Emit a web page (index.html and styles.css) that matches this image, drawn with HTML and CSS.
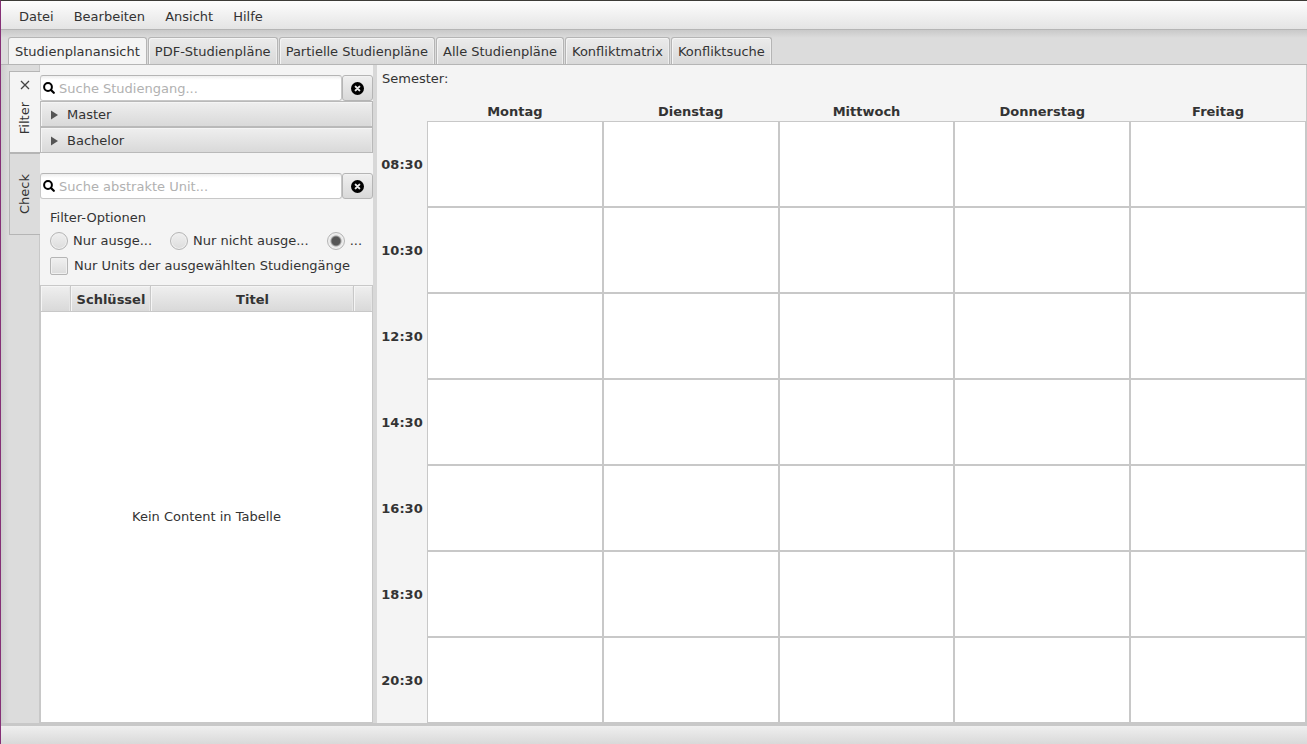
FILE: index.html
```html
<!DOCTYPE html>
<html lang="de">
<head>
<meta charset="utf-8">
<title>Studienplanansicht</title>
<link rel="stylesheet" href="styles.css">
</head>
<body>
<div class="window">
  <nav class="menubar">
    <button type="button">Datei</button>
    <button type="button">Bearbeiten</button>
    <button type="button">Ansicht</button>
    <button type="button">Hilfe</button>
  </nav>
  <div class="tabs" role="tablist">
    <button type="button" role="tab" class="tab active" aria-selected="true">Studienplanansicht</button>
    <button type="button" role="tab" class="tab">PDF-Studienpläne</button>
    <button type="button" role="tab" class="tab">Partielle Studienpläne</button>
    <button type="button" role="tab" class="tab">Alle Studienpläne</button>
    <button type="button" role="tab" class="tab">Konfliktmatrix</button>
    <button type="button" role="tab" class="tab">Konfliktsuche</button>
  </div>
  <main class="content">
    <div class="side-tabs" role="tablist">
      <div class="side-tab selected">
        <button type="button" class="close" aria-label="Schließen">
          <svg width="10" height="10" viewBox="0 0 10 10"><path d="M1 1L9 9M9 1L1 9" stroke="#444" stroke-width="1.3" fill="none"/></svg>
        </button>
        <button type="button" role="tab" class="side-label">Filter</button>
      </div>
      <div class="side-tab">
        <button type="button" role="tab" class="side-label">Check</button>
      </div>
    </div>
    <section class="filter">
      <div class="search">
        <div class="field">
          <svg class="lens" width="12" height="12" viewBox="0 0 12 12"><circle cx="5" cy="5" r="3.9" fill="none" stroke="#000" stroke-width="2"/><path d="M8 8L10.8 10.8" stroke="#000" stroke-width="2.2" stroke-linecap="round"/></svg>
          <input type="text" placeholder="Suche Studiengang..." aria-label="Suche Studiengang">
        </div>
        <button type="button" class="clear" aria-label="Suche leeren">
          <svg width="13" height="13" viewBox="0 0 14 14"><circle cx="7" cy="7" r="7" fill="#000"/><path d="M5 5L9 9M9 5L5 9" stroke="#e8e8e8" stroke-width="2.2" stroke-linecap="round"/></svg>
        </button>
      </div>
      <button type="button" class="group"><svg width="7" height="10" viewBox="0 0 7 10"><path d="M0 0.5L7 5L0 9.5Z" fill="#555"/></svg>Master</button>
      <button type="button" class="group"><svg width="7" height="10" viewBox="0 0 7 10"><path d="M0 0.5L7 5L0 9.5Z" fill="#555"/></svg>Bachelor</button>
      <div class="search units">
        <div class="field">
          <svg class="lens" width="12" height="12" viewBox="0 0 12 12"><circle cx="5" cy="5" r="3.9" fill="none" stroke="#000" stroke-width="2"/><path d="M8 8L10.8 10.8" stroke="#000" stroke-width="2.2" stroke-linecap="round"/></svg>
          <input type="text" placeholder="Suche abstrakte Unit..." aria-label="Suche abstrakte Unit">
        </div>
        <button type="button" class="clear" aria-label="Suche leeren">
          <svg width="13" height="13" viewBox="0 0 14 14"><circle cx="7" cy="7" r="7" fill="#000"/><path d="M5 5L9 9M9 5L5 9" stroke="#e8e8e8" stroke-width="2.2" stroke-linecap="round"/></svg>
        </button>
      </div>
      <fieldset class="options">
        <legend>Filter-Optionen</legend>
        <div class="radios">
          <label><input type="radio" name="units">Nur ausge...</label>
          <label><input type="radio" name="units">Nur nicht ausge...</label>
          <label><input type="radio" name="units" checked>...</label>
        </div>
        <label class="check"><input type="checkbox">Nur Units der ausgewählten Studiengänge</label>
      </fieldset>
      <div class="units-list">
        <table class="units-table">
          <colgroup><col class="c-mark"><col class="c-key"><col><col class="c-menu"></colgroup>
          <thead><tr><th></th><th>Schlüssel</th><th>Titel</th><th></th></tr></thead>
        </table>
        <div class="empty">Kein Content in Tabelle</div>
      </div>
    </section>
    <div class="splitter"></div>
    <section class="plan">
      <div class="semester">Semester:</div>
      <table class="week">
        <colgroup><col class="c-time"><col><col><col><col><col></colgroup>
        <thead><tr><td></td><th>Montag</th><th>Dienstag</th><th>Mittwoch</th><th>Donnerstag</th><th>Freitag</th></tr></thead>
        <tbody>
          <tr><th>08:30</th><td></td><td></td><td></td><td></td><td></td></tr>
          <tr><th>10:30</th><td></td><td></td><td></td><td></td><td></td></tr>
          <tr><th>12:30</th><td></td><td></td><td></td><td></td><td></td></tr>
          <tr><th>14:30</th><td></td><td></td><td></td><td></td><td></td></tr>
          <tr><th>16:30</th><td></td><td></td><td></td><td></td><td></td></tr>
          <tr><th>18:30</th><td></td><td></td><td></td><td></td><td></td></tr>
          <tr><th>20:30</th><td></td><td></td><td></td><td></td><td></td></tr>
        </tbody>
      </table>
    </section>
  </main>
  <footer class="status"></footer>
</div>
</body>
</html>
```
FILE: styles.css
```css
* { box-sizing: border-box; }

body {
  margin: 0;
  font: 13px/16px "DejaVu Sans", sans-serif;
  color: #333;
}

button, input {
  margin: 0;
  font: inherit;
  color: inherit;
}

button {
  padding: 0;
  border: 0;
  background: none;
}

svg { display: block; flex: none; }

table { border-spacing: 0; table-layout: fixed; width: 100%; }
th, td { padding: 0; }

.window {
  display: flex;
  flex-direction: column;
  min-height: 100vh;
  background: #f4f4f4;
  border-top: 1px solid #3c3b37;
  border-left: 1px solid #853076;
}

.menubar {
  display: flex;
  gap: 20px;
  height: 29px;
  padding: 3px 18px 0;
  background: linear-gradient(#fdfdfd, #e4e4e4);
  border-bottom: 1px solid #b5b5b5;
}

.tabs {
  display: flex;
  align-items: flex-end;
  gap: 1px;
  height: 35px;
  padding: 0 7px;
  background: linear-gradient(#c9c9c9, #dcdcdc 8px);
  border-bottom: 1px solid #b5b5b5;
}

.tab {
  height: 27px;
  padding: 2px 6px 0;
  background: linear-gradient(#ebebeb, #d9d9d9);
  border: 1px solid #b5b5b5;
  border-bottom: 0;
  border-radius: 3px 3px 0 0;
  box-shadow: inset 1px 1px #f4f4f4, inset -1px 0 #eee;
  white-space: nowrap;
}

.tab.active {
  background: #f4f4f4;
  box-shadow: none;
}

.content {
  display: flex;
  flex: 1;
  border-bottom: 1px solid #c8c8c8;
}

.side-tabs {
  width: 39px;
  padding: 6px 0 0 8px;
  background: linear-gradient(90deg, #cdcdcd, #dcdcdc 8px);
  border-right: 1px solid #c8c8c8;
}

.side-tab {
  display: flex;
  flex-direction: column;
  align-items: center;
  justify-content: center;
  gap: 12px;
  height: 82px;
  border: 1px solid #b5b5b5;
  border-right: 0;
  margin-right: -1px;
  background: #dcdcdc;
}

.side-tab.selected {
  justify-content: flex-start;
  padding-top: 8px;
  background: #f4f4f4;
}

.side-label {
  writing-mode: vertical-rl;
  transform: rotate(180deg);
}

.filter {
  display: flex;
  flex-direction: column;
  width: 333px;
  padding-top: 10px;
}

.search { display: flex; height: 26px; }
.search.units { margin-top: 20px; }

.field {
  display: flex;
  flex: 1;
  align-items: center;
  gap: 4px;
  padding-left: 2px;
  background: linear-gradient(#eee, #fff 4px);
  border: 1px solid #c8c8c8;
  border-top-color: #b5b5b5;
  border-radius: 3px;
}

.field input {
  flex: 1;
  min-width: 0;
  padding: 2px 0 0;
  border: 0;
  outline: 0;
  background: transparent;
}

.field input::placeholder { color: #b1b1b1; opacity: 1; }

.clear {
  display: grid;
  place-items: center;
  width: 31px;
  background: linear-gradient(#efefef, #d9d9d9);
  border: 1px solid #b5b5b5;
  border-radius: 3px;
  box-shadow: inset 0 1px #f2f2f2;
}

.group {
  display: flex;
  align-items: center;
  gap: 9px;
  height: 26px;
  padding: 2px 10px 0;
  background: linear-gradient(#efefef, #d9d9d9);
  border: 1px solid #b9b9b9;
  box-shadow: inset 1px 1px #f5f5f5, inset -1px 0 #e6e6e6;
}

.options {
  margin: 0;
  padding: 6px 10px 10px;
  border: 0;
}

.options legend { padding: 11px 0 0; }

.radios { display: flex; gap: 18px; }

.options label {
  display: flex;
  align-items: center;
  gap: 5px;
  white-space: nowrap;
}

.options .check { margin-top: 7px; gap: 6px; }

.options input {
  appearance: none;
  width: 18px;
  height: 18px;
  border: 1px solid #b5b5b5;
  background: linear-gradient(#f0f0f0, #dcdcdc);
  box-shadow: inset 0 0 0 1px #f0f0f0;
}

.options input[type="radio"] { border-radius: 50%; }

.options input[type="radio"]:checked {
  background: radial-gradient(circle, #555 4px, #e8e8e8 6px);
}

.options input[type="checkbox"] { border-radius: 2px; }

.units-list {
  display: flex;
  flex: 1;
  flex-direction: column;
  background: #fff;
  border: 1px solid #c8c8c8;
}

.units-table th {
  height: 26px;
  padding: 2px 0 0 1px;
  background: linear-gradient(#efefef, #d9d9d9);
  border-right: 1px solid #c8c8c8;
  border-bottom: 1px solid #c8c8c8;
  box-shadow: inset 1px 1px #f5f5f5, inset -1px 0 #e6e6e6;
}

.units-table th:last-child { border-right: 0; }
.c-mark { width: 30px; }
.c-key { width: 80px; }
.c-menu { width: 18px; }

.empty {
  display: flex;
  flex: 1;
  align-items: center;
  justify-content: center;
}

.splitter { width: 4px; background: #d8d8d8; }

.plan {
  display: flex;
  flex: 1;
  flex-direction: column;
  border-right: 1px solid #c8c8c8;
}

.semester { padding: 6px 5px 10px; }

.week { flex: 1; }
.week thead th { height: 24px; padding-top: 6px; }
.week tbody th { height: 86px; padding-top: 2px; }
.week tbody td {
  background: #fff;
  border: 1px solid #c8c8c8;
}

.c-time { width: 50px; }

.status {
  height: 20px;
  background: linear-gradient(#efefef, #d9d9d9);
  border-top: 2px solid #c8c8c8;
}
```
